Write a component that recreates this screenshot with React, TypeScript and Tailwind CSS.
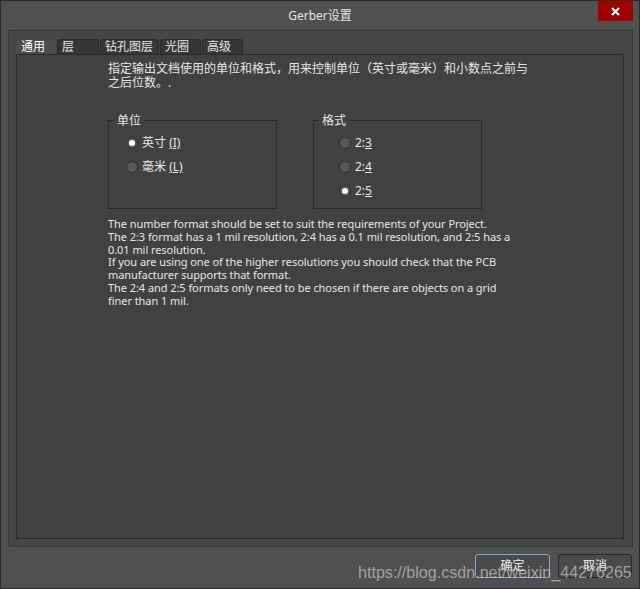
import React from 'react';

const cjk = "font-['Noto_Sans','Noto_Sans_CJK_SC',sans-serif]";

const Radio = ({ checked, label, hotkey }: { checked?: boolean; label: string; hotkey: string }) => (
  <div className="flex items-center h-[24px]">
    <span className="w-[12px] h-[12px] rounded-full bg-[#575757] border border-[#2e2e2e] flex items-center justify-center">
      {checked && <span className="w-[6px] h-[6px] rounded-full bg-white" />}
    </span>
    <span className="ml-[4px] text-[12px] text-[#e8e8e8] leading-none">
      {label}
      {hotkey && <span className="underline">{hotkey}</span>}
    </span>
  </div>
);

const GroupBox = ({ title, children, pad }: { title: string; children: React.ReactNode; pad: string }) => (
  <div className={`relative w-[169px] h-[89px] border border-[#2b2b2b] pt-[10px] ${pad}`}>
    <span className="absolute -top-[7px] left-[5px] px-[3px] bg-[#414141] text-[12px] leading-[14px]">
      {title}
    </span>
    {children}
  </div>
);

const tabs = ['通用', '层', '钻孔图层', '光圈', '高级'];
const tabWidths = ['w-[40px]', 'w-[42px]', 'w-[59px]', 'w-[41px]', 'w-[41px]'];

export default function App() {
  return (
    <div className={`w-[640px] h-[589px] bg-[#505050] border border-[#2a2a2a] flex flex-col relative ${cjk}`}>
      {/* title bar */}
      <div className="h-[29px] flex items-center justify-center relative">
        <span className="text-[12px] text-[#e2e2e2]">Gerber设置</span>
        <div className="absolute right-[6px] top-0 w-[35px] h-[20px] bg-[#a10000] flex items-center justify-center">
          <svg width="9" height="9" viewBox="0 0 9 9">
            <path d="M1 1L8 8M8 1L1 8" stroke="white" strokeWidth="2.2" />
          </svg>
        </div>
      </div>

      {/* outer panel */}
      <div className="ml-[7px] mr-[6px] h-[517px] bg-[#464646] border border-[#393939] pt-[8px] pl-[7px] pr-[8px] pb-[7px] flex flex-col">
        <div className="flex h-[15px] items-end">
          {tabs.map((t, i) => (
            <div
              key={t}
              className={`${tabWidths[i]} h-[15px] rounded-t-[3px] border border-b-0 text-[12px] leading-[14px] pl-[4px] ${
                i === 0
                  ? 'bg-[#4c4c4c] border-[#4c4c4c] text-white'
                  : 'bg-[#363636] border-[#2b2b2b] text-[#e6e6e6] ml-[1px]'
              }`}
            >
              {t}
            </div>
          ))}
        </div>
        <div className="flex-1 bg-[#414141] border border-[#2b2b2b] pl-[91px] pt-[7px] text-[#e6e6e6]">
          <p className="text-[12px] leading-[14px] whitespace-nowrap">
            指定输出文档使用的单位和格式，用来控制单位（英寸或毫米）和小数点之前与
            <br />
            之后位数。.
          </p>

          <div className="flex gap-[36px] mt-[30px]">
            <GroupBox title="单位" pad="pl-[17px]">
              <Radio checked label="英寸 " hotkey="(I)" />
              <Radio label="毫米 " hotkey="(L)" />
            </GroupBox>
            <GroupBox title="格式" pad="pl-[25px]">
              <Radio label="2:" hotkey="3" />
              <Radio label="2:" hotkey="4" />
              <Radio checked label="2:" hotkey="5" />
            </GroupBox>
          </div>

          <p className="mt-[9px] text-[11px] leading-[12.8px] whitespace-nowrap font-['Noto_Sans',sans-serif] tracking-[-0.06px]">
            The number format should be set to suit the requirements of your Project.
            <br />
            The 2:3 format has a 1 mil resolution, 2:4 has a 0.1 mil resolution, and 2:5 has a
            <br />
            0.01 mil resolution.
            <br />
            If you are using one of the higher resolutions you should check that the PCB
            <br />
            manufacturer supports that format.
            <br />
            The 2:4 and 2:5 formats only need to be chosen if there are objects on a grid
            <br />
            finer than 1 mil.
          </p>
        </div>
      </div>

      {/* buttons */}
      <div className="flex justify-end gap-[8px] pr-[7px] mt-[7px]">
        <button className="w-[75px] h-[24px] rounded-[3px] border border-[#7fa9d4] bg-[#4a4a4a] text-[12px] text-[#f0f0f0]">
          确定
        </button>
        <button className="w-[74px] h-[24px] rounded-[3px] border border-[#2b2b2b] bg-[#4a4a4a] text-[12px] text-[#f0f0f0]">
          取消
        </button>
      </div>

      {/* watermark */}
      <div className="absolute left-[357px] top-[559px] text-[16.1px] leading-[24px] text-[#c8c8c8]/70 font-['Liberation_Sans',sans-serif] pointer-events-none whitespace-nowrap">
        https://blog.csdn.net/weixin_44276265
      </div>
    </div>
  );
}
